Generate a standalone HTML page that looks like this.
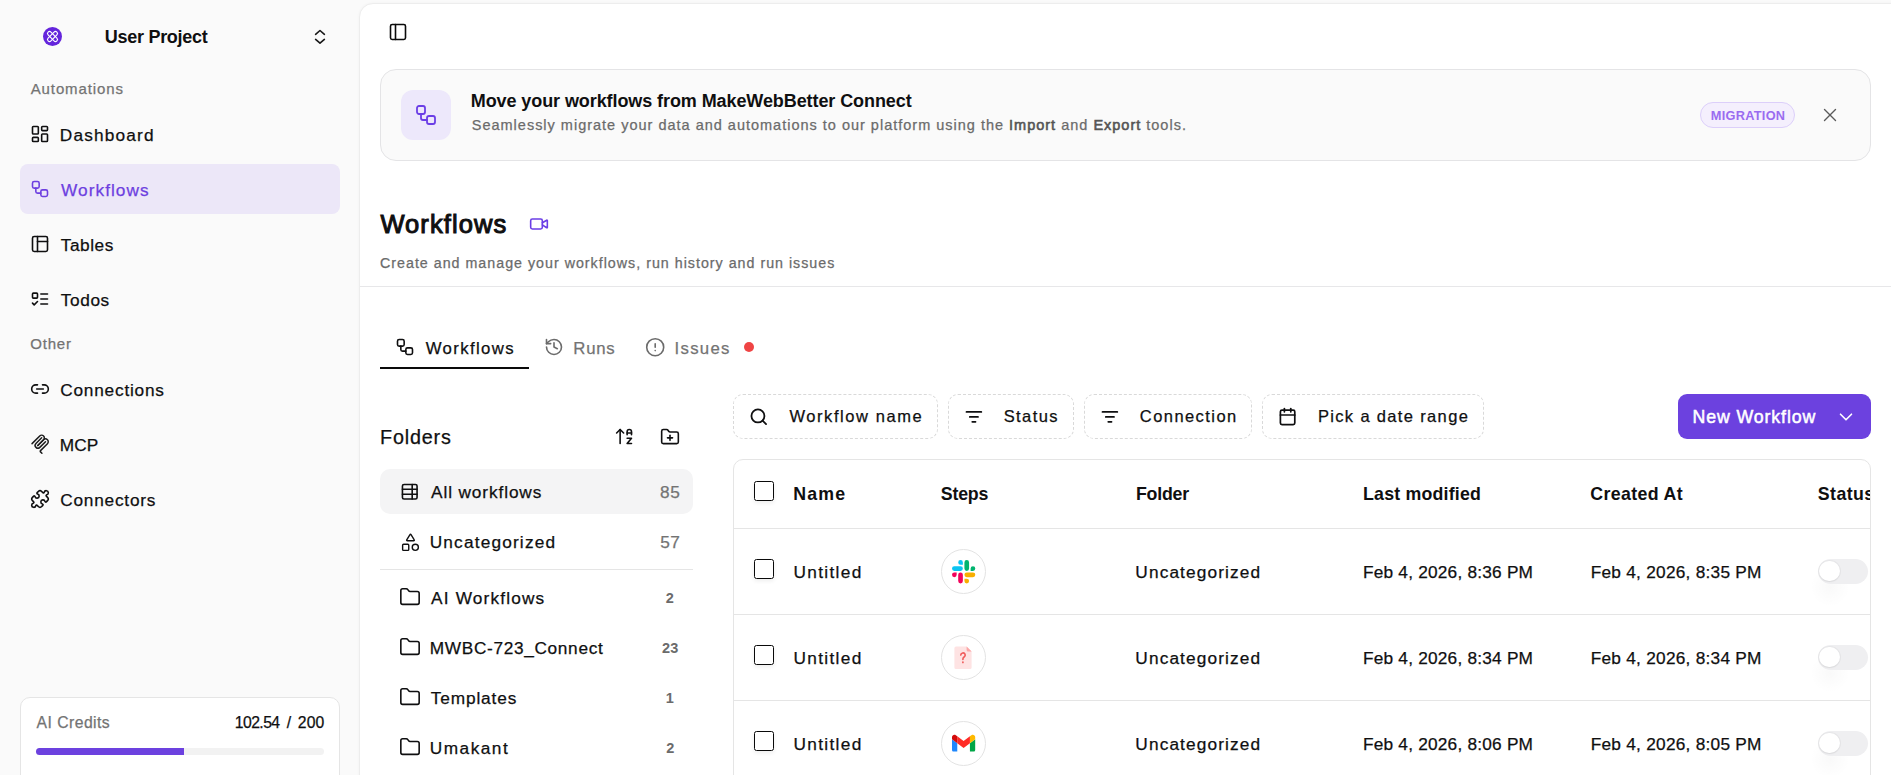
<!DOCTYPE html>
<html><head><meta charset="utf-8"><title>Workflows</title>
<style>
html,body{margin:0;padding:0}
body{width:1891px;height:775px;overflow:hidden;position:relative;background:#fafafa;font-family:'Liberation Sans',sans-serif;}
.t{position:absolute;white-space:nowrap;font-family:'Liberation Sans',sans-serif;}
.b{position:absolute}
.i{position:absolute;overflow:visible}
</style></head><body>
<div class="b" style="left:359px;top:3px;width:1600px;height:900px;background:#fff;border:1px solid #ededed;border-radius:14px 0 0 0;box-sizing:border-box;box-shadow:0 0 3px rgba(0,0,0,.035)"></div>
<div class="b" style="left:42.8px;top:26.9px;width:19.4px;height:19.4px;border-radius:50%;background:#6424dc"></div>
<svg class="i" style="left:40px;top:24px" width="25" height="25" viewBox="-12.5 -12.5 25 25" fill="none" stroke="#fff" stroke-width="1.15"><rect x="-6.2" y="-2" width="12.4" height="4" rx="2" transform="rotate(45)"/><rect x="-6.2" y="-2" width="12.4" height="4" rx="2" transform="rotate(-45)"/></svg>
<span class="t" style="left:104.72px;top:28px;font-size:18.0px;line-height:18.0px;font-weight:700;color:#0f0f10;letter-spacing:-0.269px;">User Project</span>
<svg class="i" style="left:300px;top:20px" width="40" height="35" viewBox="300 20 40 35" fill="none" stroke="#171717" stroke-width="1.6" stroke-linecap="round" stroke-linejoin="round"><path d="M315.6 34.3 L320 30.5 L324.4 34.3"/><path d="M315.6 39.4 L320 43.2 L324.4 39.4"/></svg>
<span class="t" style="left:30.73px;top:81px;font-size:15.0px;line-height:15.0px;font-weight:400;color:#737373;letter-spacing:0.887px;-webkit-text-stroke:0.25px #737373;">Automations</span>
<div class="b" style="left:20px;top:164px;width:320px;height:50px;background:#ece7f8;border-radius:8px"></div>
<span class="t" style="left:59.74px;top:127px;font-size:17.25px;line-height:17.25px;font-weight:400;color:#0f0f10;letter-spacing:1.187px;-webkit-text-stroke:0.25px #0f0f10;">Dashboard</span>
<span class="t" style="left:61.04px;top:182px;font-size:17.25px;line-height:17.25px;font-weight:400;color:#6d3fe0;letter-spacing:1.047px;-webkit-text-stroke:0.25px #6d3fe0;">Workflows</span>
<span class="t" style="left:60.78px;top:237px;font-size:17.25px;line-height:17.25px;font-weight:400;color:#0f0f10;letter-spacing:0.529px;-webkit-text-stroke:0.25px #0f0f10;">Tables</span>
<span class="t" style="left:60.78px;top:292px;font-size:17.25px;line-height:17.25px;font-weight:400;color:#0f0f10;letter-spacing:0.610px;-webkit-text-stroke:0.25px #0f0f10;">Todos</span>
<span class="t" style="left:60.26px;top:382px;font-size:17.25px;line-height:17.25px;font-weight:400;color:#0f0f10;letter-spacing:0.781px;-webkit-text-stroke:0.25px #0f0f10;">Connections</span>
<span class="t" style="left:59.74px;top:437px;font-size:17.25px;line-height:17.25px;font-weight:400;color:#0f0f10;letter-spacing:0.049px;-webkit-text-stroke:0.25px #0f0f10;">MCP</span>
<span class="t" style="left:60.26px;top:492px;font-size:17.25px;line-height:17.25px;font-weight:400;color:#0f0f10;letter-spacing:0.776px;-webkit-text-stroke:0.25px #0f0f10;">Connectors</span>
<svg class="i" style="left:30px;top:124px;" width="20" height="20" viewBox="0 0 24 24" fill="none" stroke="#0f0f10" stroke-width="1.920" stroke-linecap="round" stroke-linejoin="round"><rect width="7" height="9" x="3" y="3" rx="1"/><rect width="7" height="5" x="14" y="3" rx="1"/><rect width="7" height="9" x="14" y="12" rx="1"/><rect width="7" height="5" x="3" y="16" rx="1"/></svg>
<svg class="i" style="left:30px;top:179px;" width="20" height="20" viewBox="0 0 24 24" fill="none" stroke="#6d3fe0" stroke-width="1.920" stroke-linecap="round" stroke-linejoin="round"><rect width="8" height="8" x="3" y="3" rx="2"/><path d="M7 11v4a2 2 0 0 0 2 2h4"/><rect width="8" height="8" x="13" y="13" rx="2"/></svg>
<svg class="i" style="left:30px;top:234px;" width="20" height="20" viewBox="0 0 24 24" fill="none" stroke="#0f0f10" stroke-width="1.920" stroke-linecap="round" stroke-linejoin="round"><rect width="18" height="18" x="3" y="3" rx="2"/><path d="M9 3v18"/><path d="M9 9h12"/></svg>
<svg class="i" style="left:30px;top:289px;" width="20" height="20" viewBox="0 0 24 24" fill="none" stroke="#0f0f10" stroke-width="1.920" stroke-linecap="round" stroke-linejoin="round"><rect x="3" y="5" width="6" height="6" rx="1"/><path d="m3 17 2 2 4-4"/><path d="M13 6h8"/><path d="M13 12h8"/><path d="M13 18h8"/></svg>
<span class="t" style="left:30.25px;top:336px;font-size:15.0px;line-height:15.0px;font-weight:400;color:#737373;letter-spacing:0.787px;-webkit-text-stroke:0.25px #737373;">Other</span>
<svg class="i" style="left:30px;top:379px;" width="20" height="20" viewBox="0 0 24 24" fill="none" stroke="#0f0f10" stroke-width="1.920" stroke-linecap="round" stroke-linejoin="round"><path d="M9 17H7A5 5 0 0 1 7 7h2"/><path d="M15 7h2a5 5 0 1 1 0 10h-2"/><line x1="8" x2="16" y1="12" y2="12"/></svg>
<svg class="i" style="left:29.8px;top:433.6px" width="20.4" height="20.4" viewBox="0 0 180 180" fill="none" stroke="#1c1c1c" stroke-width="13" stroke-linecap="round"><path d="M18 84.8528L85.8822 16.9706C95.2548 7.59798 110.451 7.59798 119.823 16.9706C129.196 26.3431 129.196 41.5391 119.823 50.9117L68.5581 102.177"/><path d="M69.2652 101.47L119.823 50.9117C129.196 41.5391 144.392 41.5391 153.765 50.9117L154.118 51.2652C163.491 60.6378 163.491 75.8338 154.118 85.2063L92.7248 146.6C89.6006 149.724 89.6006 154.789 92.7248 157.913L105.331 170.52"/><path d="M102.853 33.9411L52.6482 84.1457C43.2756 93.5183 43.2756 108.714 52.6482 118.087C62.0208 127.459 77.2167 127.459 86.5893 118.087L136.794 67.8822"/></svg>
<svg class="i" style="left:29.5px;top:489px;" width="20" height="20" viewBox="0 0 24 24" fill="none" stroke="#0f0f10" stroke-width="1.920" stroke-linecap="round" stroke-linejoin="round"><path d="M15.39 4.39a1 1 0 0 0 1.68-.474 2.5 2.5 0 1 1 3.014 3.015 1 1 0 0 0-.474 1.68l1.683 1.682a2.414 2.414 0 0 1 0 3.414L19.61 15.39a1 1 0 0 1-1.68-.474 2.5 2.5 0 1 0-3.014 3.015 1 1 0 0 1 .474 1.68l-1.683 1.682a2.414 2.414 0 0 1-3.414 0L8.61 19.61a1 1 0 0 0-1.68.474 2.5 2.5 0 1 1-3.014-3.015 1 1 0 0 0 .474-1.68l-1.683-1.682a2.414 2.414 0 0 1 0-3.414L4.39 8.61a1 1 0 0 1 1.68.474 2.5 2.5 0 1 0 3.014-3.015 1 1 0 0 1-.474-1.68l1.683-1.682a2.414 2.414 0 0 1 3.414 0z"/></svg>
<div class="b" style="left:20px;top:697px;width:320px;height:120px;background:#fff;border:1px solid #e5e5e5;border-radius:10px;box-sizing:border-box"></div>
<span class="t" style="left:36.62px;top:715px;font-size:15.75px;line-height:15.75px;font-weight:400;color:#737373;letter-spacing:0.440px;-webkit-text-stroke:0.25px #737373;">AI Credits</span>
<span class="t" style="left:234.74px;top:715px;font-size:15.75px;line-height:15.75px;font-weight:400;color:#0f0f10;letter-spacing:-0.558px;-webkit-text-stroke:0.25px #0f0f10;">102.54</span>
<span class="t" style="left:286.73px;top:715px;font-size:15.75px;line-height:15.75px;font-weight:400;color:#0f0f10;letter-spacing:1.240px;-webkit-text-stroke:0.25px #0f0f10;">/</span>
<span class="t" style="left:297.74px;top:715px;font-size:15.75px;line-height:15.75px;font-weight:400;color:#0f0f10;letter-spacing:0.133px;-webkit-text-stroke:0.25px #0f0f10;">200</span>
<div class="b" style="left:36px;top:748px;width:288px;height:7px;background:#f2f2f2;border-radius:4px"></div>
<div class="b" style="left:36px;top:748px;width:148px;height:7px;background:#6c41df;border-radius:4px 0 0 4px"></div>
<svg class="i" style="left:388px;top:22px;" width="20" height="20" viewBox="0 0 24 24" fill="none" stroke="#0a0a0a" stroke-width="1.920" stroke-linecap="round" stroke-linejoin="round"><rect width="18" height="18" x="3" y="3" rx="2"/><path d="M9 3v18"/></svg>
<div class="b" style="left:380px;top:69px;width:1491px;height:92px;background:#fafafa;border:1px solid #e4e4e6;border-radius:16px;box-sizing:border-box"></div>
<div class="b" style="left:401px;top:90px;width:50px;height:50px;background:#ede8fb;border-radius:12px"></div>
<svg class="i" style="left:414px;top:103px;" width="24" height="24" viewBox="0 0 24 24" fill="none" stroke="#6b3ee6" stroke-width="1.800" stroke-linecap="round" stroke-linejoin="round"><rect width="8" height="8" x="3" y="3" rx="2"/><path d="M7 11v4a2 2 0 0 0 2 2h4"/><rect width="8" height="8" x="13" y="13" rx="2"/></svg>
<span class="t" style="left:470.73px;top:92px;font-size:18.0px;line-height:18.0px;font-weight:700;color:#0f0f10;letter-spacing:-0.085px;">Move your workflows from MakeWebBetter Connect</span>
<span class="t" style="left:471.75px;top:118px;font-size:14.5px;line-height:14.5px;color:#6b6b6b;letter-spacing:0.995px;-webkit-text-stroke:0.25px #6b6b6b">Seamlessly migrate your data and automations to our platform using the <span style="color:#555555;-webkit-text-stroke:0.58px #555555">Import</span> and <span style="color:#555555;-webkit-text-stroke:0.58px #555555">Export</span> tools.</span>
<div class="b" style="left:1700px;top:102px;width:95px;height:26px;background:#f4effd;border:1px solid #dccffa;border-radius:13px;box-sizing:border-box"></div>
<span class="t" style="left:1710.87px;top:110px;font-size:12.75px;line-height:12.75px;font-weight:700;color:#9a6cf0;letter-spacing:0.273px;">MIGRATION</span>
<svg class="i" style="left:1820px;top:105px" width="20" height="20" viewBox="1820 105 20 20" fill="none" stroke="#5a5a5a" stroke-width="1.4" stroke-linecap="round"><path d="M1824.5 109.5 L1835.5 120.5"/><path d="M1835.5 109.5 L1824.5 120.5"/></svg>
<span class="t" style="left:380.38px;top:212px;font-size:25.5px;line-height:25.5px;font-weight:400;color:#0f0f10;letter-spacing:1.091px;-webkit-text-stroke:1.02px #0f0f10;">Workflows</span>
<svg class="i" style="left:529px;top:214px;" width="20" height="20" viewBox="0 0 24 24" fill="none" stroke="#6b3ee6" stroke-width="1.920" stroke-linecap="round" stroke-linejoin="round"><path d="m16 13 5.223 3.482a.5.5 0 0 0 .777-.416V7.87a.5.5 0 0 0-.752-.432L16 10.5"/><rect x="2" y="6" width="14" height="12" rx="2"/></svg>
<span class="t" style="left:380.01px;top:256px;font-size:14.25px;line-height:14.25px;font-weight:400;color:#6b6b6b;letter-spacing:1.002px;-webkit-text-stroke:0.25px #6b6b6b;">Create and manage your workflows, run history and run issues</span>
<div class="b" style="left:360px;top:286px;width:1531px;height:1px;background:#e7e7e9"></div>
<svg class="i" style="left:395px;top:337px;" width="20" height="20" viewBox="0 0 24 24" fill="none" stroke="#0f0f10" stroke-width="1.920" stroke-linecap="round" stroke-linejoin="round"><rect width="8" height="8" x="3" y="3" rx="2"/><path d="M7 11v4a2 2 0 0 0 2 2h4"/><rect width="8" height="8" x="13" y="13" rx="2"/></svg>
<span class="t" style="left:425.74px;top:341px;font-size:16.75px;line-height:16.75px;font-weight:400;color:#0f0f10;letter-spacing:1.369px;-webkit-text-stroke:0.25px #0f0f10;">Workflows</span>
<div class="b" style="left:380px;top:367px;width:149px;height:2px;background:#0a0a0a"></div>
<svg class="i" style="left:543.5px;top:337px;" width="20" height="20" viewBox="0 0 24 24" fill="none" stroke="#6b6b6b" stroke-width="1.920" stroke-linecap="round" stroke-linejoin="round"><path d="M3 12a9 9 0 1 0 9-9 9.75 9.75 0 0 0-6.74 2.74L3 8"/><path d="M3 3v5h5"/><path d="M12 7v5l4 2"/></svg>
<span class="t" style="left:573.28px;top:341px;font-size:16.75px;line-height:16.75px;font-weight:400;color:#737373;letter-spacing:0.788px;-webkit-text-stroke:0.25px #737373;">Runs</span>
<svg class="i" style="left:644.8px;top:336.8px;" width="20.4" height="20.4" viewBox="0 0 24 24" fill="none" stroke="#6b6b6b" stroke-width="1.882" stroke-linecap="round" stroke-linejoin="round"><circle cx="12" cy="12" r="10"/><line x1="12" x2="12" y1="8" y2="12"/><line x1="12" x2="12.01" y1="16" y2="16"/></svg>
<span class="t" style="left:674.52px;top:341px;font-size:16.75px;line-height:16.75px;font-weight:400;color:#737373;letter-spacing:1.307px;-webkit-text-stroke:0.25px #737373;">Issues</span>
<div class="b" style="left:744px;top:342px;width:10px;height:10px;background:#ef4444;border-radius:50%"></div>
<span class="t" style="left:380.05px;top:428px;font-size:19.75px;line-height:19.75px;font-weight:400;color:#0f0f10;letter-spacing:0.826px;-webkit-text-stroke:0.25px #0f0f10;">Folders</span>
<svg class="i" style="left:614.3px;top:426.3px;" width="21" height="21" viewBox="0 0 24 24" fill="none" stroke="#0f0f10" stroke-width="1.829" stroke-linecap="round" stroke-linejoin="round"><path d="m3 8 4-4 4 4"/><path d="M7 4v16"/><path d="M20 8h-5"/><path d="M15 10V6.5a2.5 2.5 0 0 1 5 0V10"/><path d="M15 14h5l-5 6h5"/></svg>
<svg class="i" style="left:660.2px;top:427px;" width="20" height="20" viewBox="0 0 24 24" fill="none" stroke="#0f0f10" stroke-width="1.920" stroke-linecap="round" stroke-linejoin="round"><path d="M12 10v6"/><path d="M9 13h6"/><path d="M20 20a2 2 0 0 0 2-2V8a2 2 0 0 0-2-2h-7.9a2 2 0 0 1-1.69-.9L9.6 3.9A2 2 0 0 0 7.93 3H4a2 2 0 0 0-2 2v13a2 2 0 0 0 2 2Z"/></svg>
<div class="b" style="left:380px;top:469px;width:313px;height:45px;background:#f4f4f5;border-radius:10px"></div>
<svg class="i" style="left:400.2px;top:482.2px;" width="19.5" height="19.5" viewBox="0 0 24 24" fill="none" stroke="#0f0f10" stroke-width="1.969" stroke-linecap="round" stroke-linejoin="round"><path d="M15 3v18"/><rect width="18" height="18" x="3" y="3" rx="2"/><path d="M21 9H3"/><path d="M21 15H3"/></svg>
<span class="t" style="left:431.02px;top:484px;font-size:17.25px;line-height:17.25px;font-weight:400;color:#0f0f10;letter-spacing:0.887px;-webkit-text-stroke:0.25px #0f0f10;">All workflows</span>
<span class="t" style="left:660.05px;top:484px;font-size:17.25px;line-height:17.25px;font-weight:400;color:#737373;letter-spacing:0.569px;-webkit-text-stroke:0.25px #737373;">85</span>
<svg class="i" style="left:399.5px;top:531.5px;" width="21" height="21" viewBox="0 0 24 24" fill="none" stroke="#0f0f10" stroke-width="1.600" stroke-linecap="round" stroke-linejoin="round"><path d="M8.3 10a.7.7 0 0 1-.626-1.079L11.4 3a.7.7 0 0 1 1.198-.043L16.3 8.9a.7.7 0 0 1-.572 1.1Z"/><rect x="3" y="14" width="7" height="7" rx="1"/><circle cx="17.5" cy="17.5" r="3.5"/></svg>
<span class="t" style="left:429.73px;top:534px;font-size:17.25px;line-height:17.25px;font-weight:400;color:#0f0f10;letter-spacing:1.174px;-webkit-text-stroke:0.25px #0f0f10;">Uncategorized</span>
<span class="t" style="left:660.13px;top:534px;font-size:17.25px;line-height:17.25px;font-weight:400;color:#737373;letter-spacing:0.455px;-webkit-text-stroke:0.25px #737373;">57</span>
<div class="b" style="left:380px;top:569px;width:313px;height:1px;background:#e5e5e5"></div>
<svg class="i" style="left:398.5px;top:585.5px;" width="22" height="22" viewBox="0 0 24 24" fill="none" stroke="#0f0f10" stroke-width="1.745" stroke-linecap="round" stroke-linejoin="round"><path d="M20 20a2 2 0 0 0 2-2V8a2 2 0 0 0-2-2h-7.9a2 2 0 0 1-1.69-.9L9.6 3.9A2 2 0 0 0 7.93 3H4a2 2 0 0 0-2 2v13a2 2 0 0 0 2 2Z"/></svg>
<span class="t" style="left:431.12px;top:590px;font-size:17.25px;line-height:17.25px;font-weight:400;color:#0f0f10;letter-spacing:1.159px;-webkit-text-stroke:0.25px #0f0f10;">AI Workflows</span>
<span class="t" style="left:665.79px;top:591px;font-size:14.5px;line-height:14.5px;font-weight:700;color:#6b6b6b;letter-spacing:0.940px;">2</span>
<svg class="i" style="left:398.5px;top:635.5px;" width="22" height="22" viewBox="0 0 24 24" fill="none" stroke="#0f0f10" stroke-width="1.745" stroke-linecap="round" stroke-linejoin="round"><path d="M20 20a2 2 0 0 0 2-2V8a2 2 0 0 0-2-2h-7.9a2 2 0 0 1-1.69-.9L9.6 3.9A2 2 0 0 0 7.93 3H4a2 2 0 0 0-2 2v13a2 2 0 0 0 2 2Z"/></svg>
<span class="t" style="left:429.75px;top:640px;font-size:17.25px;line-height:17.25px;font-weight:400;color:#0f0f10;letter-spacing:0.666px;-webkit-text-stroke:0.25px #0f0f10;">MWBC-723_Connect</span>
<span class="t" style="left:662.09px;top:641px;font-size:14.5px;line-height:14.5px;font-weight:700;color:#6b6b6b;letter-spacing:0.220px;">23</span>
<svg class="i" style="left:398.5px;top:685.5px;" width="22" height="22" viewBox="0 0 24 24" fill="none" stroke="#0f0f10" stroke-width="1.745" stroke-linecap="round" stroke-linejoin="round"><path d="M20 20a2 2 0 0 0 2-2V8a2 2 0 0 0-2-2h-7.9a2 2 0 0 1-1.69-.9L9.6 3.9A2 2 0 0 0 7.93 3H4a2 2 0 0 0-2 2v13a2 2 0 0 0 2 2Z"/></svg>
<span class="t" style="left:430.78px;top:690px;font-size:17.25px;line-height:17.25px;font-weight:400;color:#0f0f10;letter-spacing:0.867px;-webkit-text-stroke:0.25px #0f0f10;">Templates</span>
<span class="t" style="left:665.83px;top:691px;font-size:14.5px;line-height:14.5px;font-weight:700;color:#6b6b6b;letter-spacing:-0.215px;">1</span>
<svg class="i" style="left:398.5px;top:735.5px;" width="22" height="22" viewBox="0 0 24 24" fill="none" stroke="#0f0f10" stroke-width="1.745" stroke-linecap="round" stroke-linejoin="round"><path d="M20 20a2 2 0 0 0 2-2V8a2 2 0 0 0-2-2h-7.9a2 2 0 0 1-1.69-.9L9.6 3.9A2 2 0 0 0 7.93 3H4a2 2 0 0 0-2 2v13a2 2 0 0 0 2 2Z"/></svg>
<span class="t" style="left:429.83px;top:740px;font-size:17.25px;line-height:17.25px;font-weight:400;color:#0f0f10;letter-spacing:1.472px;-webkit-text-stroke:0.25px #0f0f10;">Umakant</span>
<span class="t" style="left:666.19px;top:741px;font-size:14.5px;line-height:14.5px;font-weight:700;color:#6b6b6b;letter-spacing:0.740px;">2</span>
<div class="b" style="left:733px;top:394px;width:205px;height:45px;border:1px dashed #d9d9d9;border-radius:10px;box-sizing:border-box;background:#fff"></div>
<svg class="i" style="left:749.3px;top:407.2px;" width="19.5" height="19.5" viewBox="0 0 24 24" fill="none" stroke="#0f0f10" stroke-width="2.215" stroke-linecap="round" stroke-linejoin="round"><circle cx="11" cy="11" r="8"/><path d="m21 21-4.3-4.3"/></svg>
<span class="t" style="left:789.44px;top:408px;font-size:16.5px;line-height:16.5px;font-weight:400;color:#0f0f10;letter-spacing:1.577px;-webkit-text-stroke:0.25px #0f0f10;">Workflow name</span>
<div class="b" style="left:948px;top:394px;width:126px;height:45px;border:1px dashed #d9d9d9;border-radius:10px;box-sizing:border-box;background:#fff"></div>
<svg class="i" style="left:964.3px;top:407.05px;" width="19.8" height="19.8" viewBox="0 0 24 24" fill="none" stroke="#0f0f10" stroke-width="2.061" stroke-linecap="round" stroke-linejoin="round"><path d="M3 6h18"/><path d="M7 12h10"/><path d="M10 18h4"/></svg>
<span class="t" style="left:1003.68px;top:408px;font-size:16.5px;line-height:16.5px;font-weight:400;color:#0f0f10;letter-spacing:1.418px;-webkit-text-stroke:0.25px #0f0f10;">Status</span>
<div class="b" style="left:1084px;top:394px;width:168px;height:45px;border:1px dashed #d9d9d9;border-radius:10px;box-sizing:border-box;background:#fff"></div>
<svg class="i" style="left:1099.9px;top:407.05px;" width="19.8" height="19.8" viewBox="0 0 24 24" fill="none" stroke="#0f0f10" stroke-width="2.061" stroke-linecap="round" stroke-linejoin="round"><path d="M3 6h18"/><path d="M7 12h10"/><path d="M10 18h4"/></svg>
<span class="t" style="left:1139.80px;top:408px;font-size:16.5px;line-height:16.5px;font-weight:400;color:#0f0f10;letter-spacing:1.440px;-webkit-text-stroke:0.25px #0f0f10;">Connection</span>
<div class="b" style="left:1262px;top:394px;width:222px;height:45px;border:1px dashed #d9d9d9;border-radius:10px;box-sizing:border-box;background:#fff"></div>
<svg class="i" style="left:1278.35px;top:407.15px;" width="19.2" height="19.2" viewBox="0 0 24 24" fill="none" stroke="#0f0f10" stroke-width="2.125" stroke-linecap="round" stroke-linejoin="round"><path d="M8 2v4"/><path d="M16 2v4"/><rect width="18" height="18" x="3" y="4" rx="2"/><path d="M3 10h18"/></svg>
<span class="t" style="left:1317.90px;top:408px;font-size:16.5px;line-height:16.5px;font-weight:400;color:#0f0f10;letter-spacing:1.346px;-webkit-text-stroke:0.25px #0f0f10;">Pick a date range</span>
<div class="b" style="left:1678px;top:394px;width:193px;height:45px;background:#6c41df;border-radius:9px"></div>
<span class="t" style="left:1692.48px;top:409px;font-size:17.75px;line-height:17.75px;font-weight:400;color:#fff;letter-spacing:0.888px;-webkit-text-stroke:0.5px #fff;">New Workflow</span>
<svg class="i" style="left:1836px;top:407px" width="20" height="20" viewBox="1836 407 20 20" fill="none" stroke="#fff" stroke-width="1.6" stroke-linecap="round" stroke-linejoin="round"><path d="M1840.5 414.2 L1846 419.8 L1851.5 414.2"/></svg>
<div class="b" style="left:733px;top:459px;width:1138px;height:400px;background:#fff;border:1px solid #e5e5e5;border-radius:10px 10px 0 0;box-sizing:border-box;overflow:hidden"></div>
<div class="b" style="left:734px;top:528px;width:1136px;height:1px;background:#e5e5e5"></div>
<div class="b" style="left:734px;top:614px;width:1136px;height:1px;background:#e5e5e5"></div>
<div class="b" style="left:734px;top:700px;width:1136px;height:1px;background:#e5e5e5"></div>
<div class="b" style="left:754px;top:481px;width:20px;height:20px;border:1.5px solid #0a0a0a;border-radius:2.5px;box-sizing:border-box;background:#fff;box-shadow:0 2px 4px rgba(0,0,0,.07)"></div>
<span class="t" style="left:793.35px;top:486px;font-size:17.75px;line-height:17.75px;font-weight:700;color:#0f0f10;letter-spacing:1.135px;">Name</span>
<span class="t" style="left:940.77px;top:486px;font-size:17.75px;line-height:17.75px;font-weight:700;color:#0f0f10;letter-spacing:-0.184px;">Steps</span>
<span class="t" style="left:1135.95px;top:486px;font-size:17.75px;line-height:17.75px;font-weight:700;color:#0f0f10;letter-spacing:-0.201px;">Folder</span>
<span class="t" style="left:1363.05px;top:486px;font-size:17.75px;line-height:17.75px;font-weight:700;color:#0f0f10;letter-spacing:0.203px;">Last modified</span>
<span class="t" style="left:1590.29px;top:486px;font-size:17.75px;line-height:17.75px;font-weight:700;color:#0f0f10;letter-spacing:0.363px;">Created At</span>
<div class="b" style="left:1790px;top:470px;width:80px;height:50px;overflow:hidden">
<span class="t" style="left:27.87px;top:16px;font-size:17.75px;line-height:17.75px;font-weight:700;color:#0f0f10;letter-spacing:0.423px;">Status</span>
</div>
<div class="b" style="left:754px;top:559px;width:20px;height:20px;border:1.5px solid #0a0a0a;border-radius:2.5px;box-sizing:border-box;background:#fff;box-shadow:0 2px 4px rgba(0,0,0,.07)"></div>
<span class="t" style="left:793.43px;top:564px;font-size:17.25px;line-height:17.25px;font-weight:400;color:#0f0f10;letter-spacing:1.341px;-webkit-text-stroke:0.25px #0f0f10;">Untitled</span>
<div class="b" style="left:941px;top:548.5px;width:45px;height:45px;border:1px solid #e3e3e3;border-radius:50%;box-sizing:border-box;background:#fff"></div>
<svg class="i" style="left:951.7px;top:559.8px" width="23.4" height="23.4" viewBox="0 0 54 54"><path fill="#0ac4f2" d="M19.712.133a5.381 5.381 0 0 0-5.376 5.387 5.381 5.381 0 0 0 5.376 5.386h5.376V5.52A5.381 5.381 0 0 0 19.712.133m0 14.365H5.376A5.381 5.381 0 0 0 0 19.884a5.381 5.381 0 0 0 5.376 5.387h14.336a5.381 5.381 0 0 0 5.376-5.387 5.381 5.381 0 0 0-5.376-5.386"/><path fill="#00b46f" d="M53.76 19.884a5.381 5.381 0 0 0-5.376-5.386 5.381 5.381 0 0 0-5.376 5.386v5.387h5.376a5.381 5.381 0 0 0 5.376-5.387m-14.336 0V5.52A5.381 5.381 0 0 0 34.048.133a5.381 5.381 0 0 0-5.376 5.387v14.364a5.381 5.381 0 0 0 5.376 5.387 5.381 5.381 0 0 0 5.376-5.387"/><path fill="#f8ae00" d="M34.048 54a5.381 5.381 0 0 0 5.376-5.387 5.381 5.381 0 0 0-5.376-5.386h-5.376v5.386A5.381 5.381 0 0 0 34.048 54m0-14.365h14.336a5.381 5.381 0 0 0 5.376-5.386 5.381 5.381 0 0 0-5.376-5.387H34.048a5.381 5.381 0 0 0-5.376 5.387 5.381 5.381 0 0 0 5.376 5.386"/><path fill="#f2035b" d="M0 34.249a5.381 5.381 0 0 0 5.376 5.386 5.381 5.381 0 0 0 5.376-5.386v-5.387H5.376A5.381 5.381 0 0 0 0 34.249m14.336 0v14.364A5.381 5.381 0 0 0 19.712 54a5.381 5.381 0 0 0 5.376-5.387V34.25a5.381 5.381 0 0 0-5.376-5.387 5.381 5.381 0 0 0-5.376 5.387"/></svg>
<span class="t" style="left:1135.33px;top:564px;font-size:17.25px;line-height:17.25px;font-weight:400;color:#0f0f10;letter-spacing:1.124px;-webkit-text-stroke:0.25px #0f0f10;">Uncategorized</span>
<span class="t" style="left:1362.94px;top:564px;font-size:17.25px;line-height:17.25px;font-weight:400;color:#0f0f10;letter-spacing:0.218px;-webkit-text-stroke:0.25px #0f0f10;">Feb 4, 2026, 8:36 PM</span>
<span class="t" style="left:1590.74px;top:564px;font-size:17.25px;line-height:17.25px;font-weight:400;color:#0f0f10;letter-spacing:0.255px;-webkit-text-stroke:0.25px #0f0f10;">Feb 4, 2026, 8:35 PM</span>
<div class="b" style="left:1810px;top:567px;width:40px;height:40px;border-radius:50%;background:radial-gradient(circle, rgba(0,0,0,.025), rgba(0,0,0,0) 70%)"></div>
<div class="b" style="left:1818.2px;top:558.8px;width:49.8px;height:25px;border-radius:12.5px;background:#efeff1"></div>
<div class="b" style="left:1819.4px;top:560.6px;width:20.5px;height:20.5px;border-radius:50%;background:#fff;box-shadow:0 0 0 1px rgba(0,0,0,.035), 0 1px 2px rgba(0,0,0,.05)"></div>
<div class="b" style="left:754px;top:645px;width:20px;height:20px;border:1.5px solid #0a0a0a;border-radius:2.5px;box-sizing:border-box;background:#fff;box-shadow:0 2px 4px rgba(0,0,0,.07)"></div>
<span class="t" style="left:793.43px;top:650px;font-size:17.25px;line-height:17.25px;font-weight:400;color:#0f0f10;letter-spacing:1.341px;-webkit-text-stroke:0.25px #0f0f10;">Untitled</span>
<div class="b" style="left:941px;top:634.5px;width:45px;height:45px;border:1px solid #e3e3e3;border-radius:50%;box-sizing:border-box;background:#fff"></div>
<svg class="i" style="left:954.2px;top:645.5px" width="18" height="24" viewBox="0 0 18 24"><path d="M2 0.5 H12.6 L17.6 5.5 V21.5 a1.6 1.6 0 0 1-1.6 1.6 H2 a1.6 1.6 0 0 1-1.6-1.6 V2.1 a1.6 1.6 0 0 1 1.6-1.6Z" fill="#fee3e3"/><path d="M12.6 0.5 L17.6 5.5 H14.2 a1.6 1.6 0 0 1-1.6-1.6Z" fill="#fca7a7"/><path d="M6.8 9.1 A2.2 2.2 0 1 1 10.1 11 C9.4 11.5 8.9 12 8.9 12.9 V13.5" fill="none" stroke="#f05a5a" stroke-width="1.6" stroke-linecap="round"/><path d="M8.9 16.1 V16.5" fill="none" stroke="#f05a5a" stroke-width="1.7" stroke-linecap="round"/></svg>
<span class="t" style="left:1135.33px;top:650px;font-size:17.25px;line-height:17.25px;font-weight:400;color:#0f0f10;letter-spacing:1.124px;-webkit-text-stroke:0.25px #0f0f10;">Uncategorized</span>
<span class="t" style="left:1362.94px;top:650px;font-size:17.25px;line-height:17.25px;font-weight:400;color:#0f0f10;letter-spacing:0.218px;-webkit-text-stroke:0.25px #0f0f10;">Feb 4, 2026, 8:34 PM</span>
<span class="t" style="left:1590.74px;top:650px;font-size:17.25px;line-height:17.25px;font-weight:400;color:#0f0f10;letter-spacing:0.255px;-webkit-text-stroke:0.25px #0f0f10;">Feb 4, 2026, 8:34 PM</span>
<div class="b" style="left:1810px;top:653px;width:40px;height:40px;border-radius:50%;background:radial-gradient(circle, rgba(0,0,0,.025), rgba(0,0,0,0) 70%)"></div>
<div class="b" style="left:1818.2px;top:644.8px;width:49.8px;height:25px;border-radius:12.5px;background:#efeff1"></div>
<div class="b" style="left:1819.4px;top:646.6px;width:20.5px;height:20.5px;border-radius:50%;background:#fff;box-shadow:0 0 0 1px rgba(0,0,0,.035), 0 1px 2px rgba(0,0,0,.05)"></div>
<div class="b" style="left:754px;top:731px;width:20px;height:20px;border:1.5px solid #0a0a0a;border-radius:2.5px;box-sizing:border-box;background:#fff;box-shadow:0 2px 4px rgba(0,0,0,.07)"></div>
<span class="t" style="left:793.43px;top:736px;font-size:17.25px;line-height:17.25px;font-weight:400;color:#0f0f10;letter-spacing:1.341px;-webkit-text-stroke:0.25px #0f0f10;">Untitled</span>
<div class="b" style="left:941px;top:720.5px;width:45px;height:45px;border:1px solid #e3e3e3;border-radius:50%;box-sizing:border-box;background:#fff"></div>
<svg class="i" style="left:951.9px;top:734.2px" width="23.2" height="17.6" viewBox="0 49.4 512 383.4" preserveAspectRatio="none"><path fill="#1f87fc" d="M34.91 432.818h81.454V251L0 163.727V397.91c0 19.287 15.622 34.91 34.91 34.91z"/><path fill="#00a647" d="M395.636 432.818h81.455c19.287 0 34.909-15.622 34.909-34.909V163.727L395.636 251z"/><path fill="#ffb900" d="M395.636 99.727V251L512 163.727v-46.545c0-43.142-49.25-67.782-83.782-41.891z"/><path fill="#ff2b25" d="M116.364 251V99.727L256 204.455 395.636 99.727V251L256 355.727z"/><path fill="#d30b0b" d="M0 117.182v46.545L116.364 251V99.727L83.782 75.291C49.25 49.4 0 74.04 0 117.18z"/></svg>
<span class="t" style="left:1135.33px;top:736px;font-size:17.25px;line-height:17.25px;font-weight:400;color:#0f0f10;letter-spacing:1.124px;-webkit-text-stroke:0.25px #0f0f10;">Uncategorized</span>
<span class="t" style="left:1362.94px;top:736px;font-size:17.25px;line-height:17.25px;font-weight:400;color:#0f0f10;letter-spacing:0.218px;-webkit-text-stroke:0.25px #0f0f10;">Feb 4, 2026, 8:06 PM</span>
<span class="t" style="left:1590.74px;top:736px;font-size:17.25px;line-height:17.25px;font-weight:400;color:#0f0f10;letter-spacing:0.255px;-webkit-text-stroke:0.25px #0f0f10;">Feb 4, 2026, 8:05 PM</span>
<div class="b" style="left:1810px;top:739px;width:40px;height:40px;border-radius:50%;background:radial-gradient(circle, rgba(0,0,0,.025), rgba(0,0,0,0) 70%)"></div>
<div class="b" style="left:1818.2px;top:730.8px;width:49.8px;height:25px;border-radius:12.5px;background:#efeff1"></div>
<div class="b" style="left:1819.4px;top:732.6px;width:20.5px;height:20.5px;border-radius:50%;background:#fff;box-shadow:0 0 0 1px rgba(0,0,0,.035), 0 1px 2px rgba(0,0,0,.05)"></div>
</body></html>
